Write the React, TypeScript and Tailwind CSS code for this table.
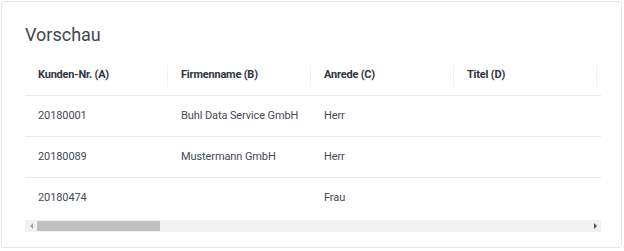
const columns = ["Kunden-Nr. (A)", "Firmenname (B)", "Anrede (C)", "Titel (D)", ""];

const rows = [
  ["20180001", "Buhl Data Service GmbH", "Herr", "", ""],
  ["20180089", "Mustermann GmbH", "Herr", "", ""],
  ["20180474", "", "Frau", "", ""],
];

export default function App() {
  return (
    <div className="w-[624px] h-[251px] bg-white p-px" style={{ fontFamily: "Roboto, 'Open Sans', sans-serif" }}>
      <div className="w-[621px] h-[247px] border border-[#e3e5ee] rounded-[3px] pl-[23px] pt-[20px]">
        <h2 className="text-[18px] leading-[26px] text-[#3f4655]">Vorschau</h2>

        <div className="mt-[8px] w-[576px] overflow-hidden">
          <div className="w-[720px]">
            <div className="flex h-[40px] border-b border-[#e8e9ee] w-[576px]">
              {columns.map((c, i) => (
                <div key={i} className="w-[143px] shrink-0 flex items-center">
                  <span className="flex-1 pl-[13px] text-[11px] font-bold text-[#2f3542] tracking-[-0.2px]">{c}</span>
                  <span className="w-px h-[22px] bg-[#eef0f4]" />
                </div>
              ))}
            </div>
            {rows.map((r, i) => (
              <div
                key={r[0]}
                className={`flex h-[41px] w-[576px] items-center ${i < rows.length - 1 ? "border-b border-[#e8e9ee]" : ""}`}
              >
                {r.map((v, j) => (
                  <div key={j} className="w-[143px] shrink-0 pl-[13px] text-[11px] text-[#454a55] tracking-[-0.1px]">
                    {v}
                  </div>
                ))}
              </div>
            ))}
          </div>

          {/* horizontal scrollbar */}
          <div className="flex items-center h-[12px] bg-[#f1f1f1] mt-px">
            <div className="w-[12px] h-full flex items-center justify-center">
              <span className="w-0 h-0 border-y-[3px] border-y-transparent border-r-[3px] border-r-[#a3a3a3]" />
            </div>
            <div className="w-[123px] h-[10px] bg-[#c1c1c1]" />
            <div className="flex-1" />
            <div className="w-[12px] h-full flex items-center justify-center">
              <span className="w-0 h-0 border-y-[3px] border-y-transparent border-l-[3px] border-l-[#505050]" />
            </div>
          </div>
        </div>
      </div>
    </div>
  );
}
